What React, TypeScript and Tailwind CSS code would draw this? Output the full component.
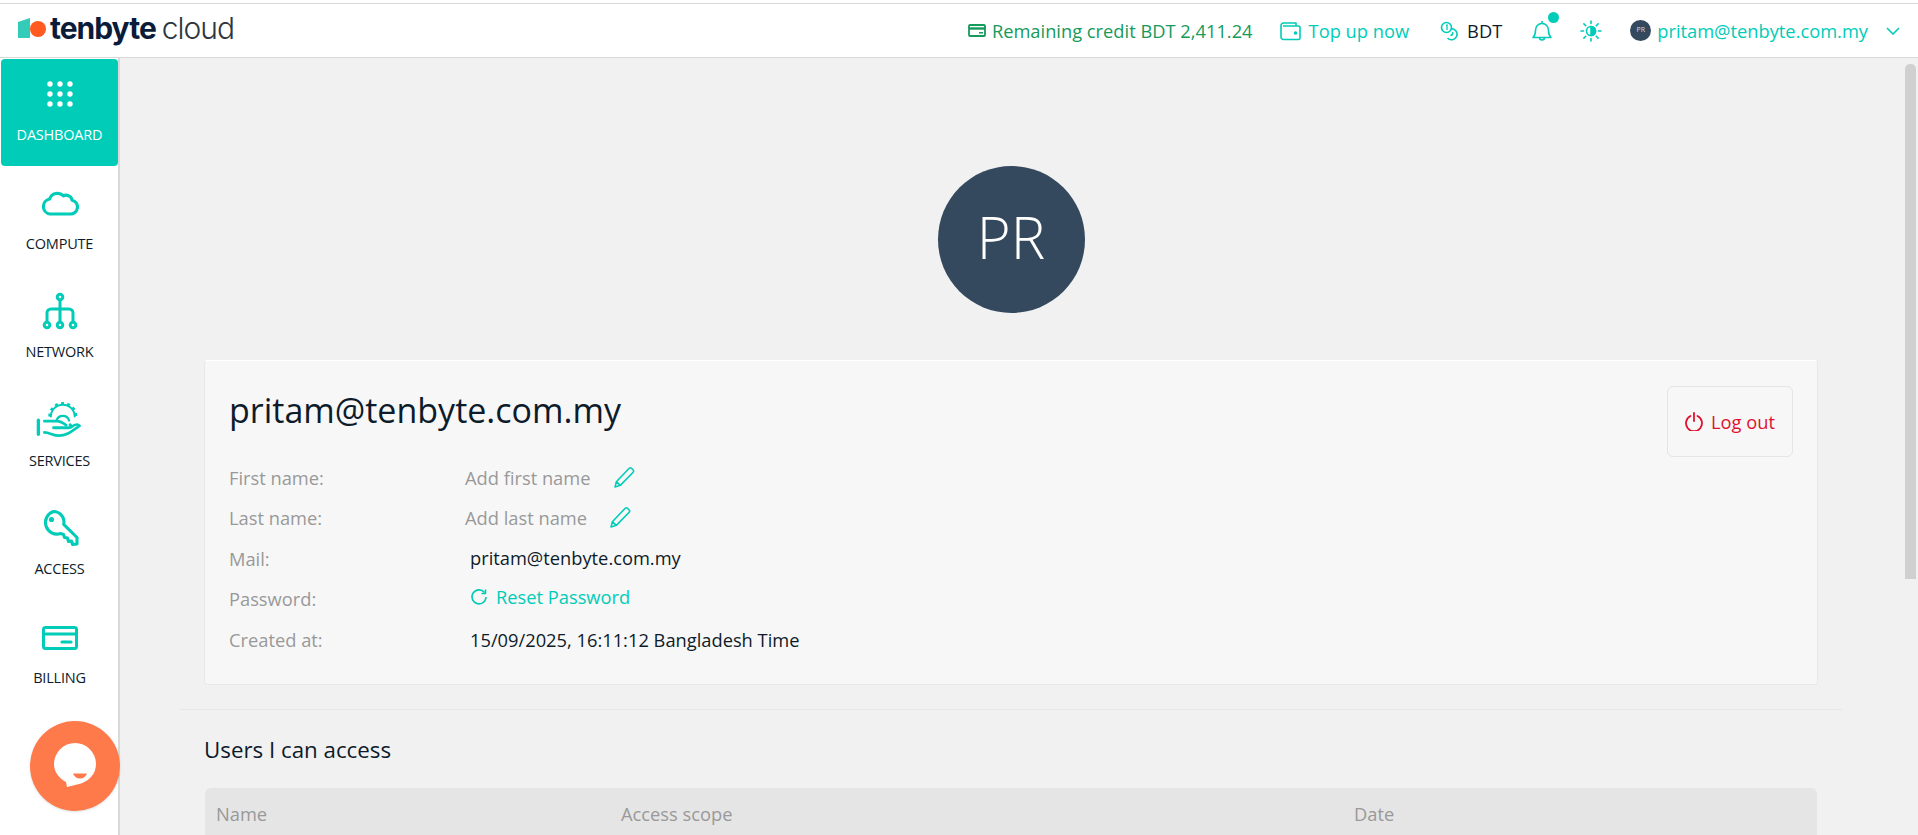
import { ReactNode } from "react";

const teal = "text-[#00ccb8]";

const GridIcon = () => (
  <svg width="26" height="26" viewBox="0 0 26 26" fill="currentColor">
    {[3, 13, 23].map((y) =>
      [3, 13, 23].map((x) => <circle key={`${x}-${y}`} cx={x} cy={y} r="2.7" />)
    )}
  </svg>
);

const CloudIcon = () => (
  <svg width="38" height="28" viewBox="0 0 38 28" fill="none" stroke="currentColor" strokeWidth="3.2" strokeLinejoin="round">
    <path d="M9 26h20.500a7 7 0 0 0 1.600-13.800 6 6 0 0 0-8.600-4.400A8.400 8.400 0 0 0 8.600 11 7.600 7.600 0 0 0 9 26Z" />
  </svg>
);

const NetworkIcon = () => (
  <svg width="36" height="38" viewBox="0 0 36 38" fill="none" stroke="currentColor" strokeWidth="3">
    <circle cx="18" cy="5" r="2.800" />
    <circle cx="5" cy="33" r="2.800" />
    <circle cx="18" cy="33" r="2.800" />
    <circle cx="31" cy="33" r="2.800" />
    <path d="M18 8v22M5 30v-9a4 4 0 0 1 4-4h18a4 4 0 0 1 4 4v9" />
  </svg>
);

const ServicesIcon = () => (
  <svg width="47" height="35" viewBox="110 68 142 106" fill="none" stroke="currentColor" strokeWidth="8" strokeLinecap="round" strokeLinejoin="round">
    <path d="M117 123v43" strokeWidth="10" />
    <path d="M135 126h38c10 0 20 6 28 12" />
    <path d="M163 146h46c6 0 8-6 4-9" strokeWidth="9" />
    <path d="M135 160c16 0 26 10 45 10 20 0 30-8 62-30-6-7-14-5-26 4" />
    <path d="M155 112a36 36 0 0 1 72 0" strokeWidth="6" />
    <path d="M151 112a40 40 0 0 1 80 0" strokeWidth="8" strokeDasharray="9 10" strokeLinecap="butt" />
    <path d="M172 124a20 20 0 0 1 38 0" strokeWidth="7" />
  </svg>
);

const KeyIcon = () => (
  <svg width="38" height="38" viewBox="0 0 38 38" fill="none" stroke="currentColor" strokeWidth="3.100" strokeLinejoin="round">
    <path d="M12.500 2.500a10.500 10.500 0 0 1 10.200 12.800L36 28.500V35l-4.500.5-1-3.500-3 .5-1-3.500-3-.5-1-3-3-1A10.500 10.500 0 1 1 12.500 2.500Z" />
    <circle cx="10.500" cy="10.500" r="2.600" fill="currentColor" stroke="none" />
  </svg>
);

const CardIcon = () => (
  <svg className="mt-[3px]" width="36" height="24" viewBox="0 0 36 24" fill="none" stroke="currentColor">
    <rect x="1.500" y="1.500" width="33" height="21" rx="2" strokeWidth="3" />
    <path d="M1.500 8h33" strokeWidth="3.200" />
    <path d="M20 16h9" strokeWidth="3.200" strokeLinecap="round" />
  </svg>
);

const NavItem = ({ icon, label, active }: { icon: ReactNode; label: string; active?: boolean }) => (
  <div
    className={`mb-[1.600px] ml-px flex h-[107px] flex-col items-center rounded-[4px] ${
      active ? "bg-[#00ccb8] text-white" : "text-[#0d1b2a]"
    }`}
  >
    <div className={`flex h-[66px] w-full items-center justify-center pt-[3px] ${active ? "text-white" : teal}`}>{icon}</div>
    <span className="text-[14.500px] leading-[20px] tracking-[-0.2px]">{label}</span>
  </div>
);

const Row = ({ label, children }: { label: string; children: ReactNode }) => (
  <div className="grid h-[40.500px] grid-cols-[236px_1fr] items-center">
    <span className="text-[#999999]">{label}</span>
    <div className="flex items-center">{children}</div>
  </div>
);

const Pencil = () => (
  <svg width="23" height="23" viewBox="0 0 22 22" fill="none" stroke="#00ccb8" strokeWidth="1.500" strokeLinejoin="round">
    <path d="M2 20l1.200-5L15.500 2.200a1.600 1.600 0 0 1 2.200 0l1.600 1.600a1.600 1.600 0 0 1 0 2.200L7 18.500 2 20ZM3.200 15 7 18.500" />
  </svg>
);

export default function App() {
  return (
    <div className="flex h-screen flex-col overflow-hidden bg-[#f1f1f1] font-['Open_Sans','Noto_Sans',sans-serif] text-[18.300px] text-[#0d1b2a]">
      <div className="h-[3px] bg-white" />
      <header className="flex h-[55px] shrink-0 items-center border-y border-[#d9d9d9] bg-white pr-[18px]">
        <div className="-mt-[5px] ml-[18px] flex items-center">
          <svg width="33" height="22" viewBox="0 0 33 22">
            <path d="M0 5 12 1v20H0Z" fill="#33ccb8" />
            <circle cx="20" cy="12" r="8" fill="#ff5a1f" />
          </svg>
          <span className="ml-[-1px] font-['Inter',sans-serif] text-[30px] leading-none font-bold tracking-[-1px] text-[#0b1b3a]">tenbyte</span>
          <span className="ml-[6px] font-['Inter',sans-serif] text-[30px] leading-none font-light tracking-[-1px] text-[#2f3640]">cloud</span>
        </div>
        <div className="ml-auto flex items-center">
          <div className="flex items-center gap-[6px] text-[#159a5b]">
            <svg width="18" height="13" viewBox="0 0 18 13" fill="none" stroke="currentColor">
              <rect x="1" y="1" width="16" height="11" rx="1" strokeWidth="1.800" />
              <path d="M1 4.500h16" strokeWidth="2.400" />
              <path d="M11 8.800h4" strokeWidth="1.500" />
            </svg>
            Remaining credit BDT 2,411.24
          </div>
          <div className={`ml-[27px] flex items-center gap-[8px] ${teal}`}>
            <svg width="21" height="20" viewBox="0 0 21 20" fill="none" stroke="currentColor" strokeWidth="1.600" strokeLinejoin="round">
              <path d="M1 4.500A2.500 2.500 0 0 1 3.500 2H16v3M1 4.500V16a2.500 2.500 0 0 0 2.500 2.500h15a1.500 1.500 0 0 0 1.500-1.500V6.500A1.500 1.500 0 0 0 18.500 5H3" />
              <circle cx="15.500" cy="12" r="1" fill="currentColor" />
            </svg>
            Top up now
          </div>
          <div className="ml-[31px] flex items-center gap-[7px]">
            <svg className={teal} width="20" height="20" viewBox="0 0 20 20" fill="none" stroke="currentColor" strokeWidth="1.600">
              <circle cx="6.500" cy="6.500" r="5" />
              <path d="M6 4.500l1-.5v5" strokeWidth="1.300" />
              <path d="M11 7.800a5.500 5.500 0 1 1-3.500 9.200M12.500 11a2.500 2.500 0 0 1-2 3.500" />
            </svg>
            BDT
          </div>
          <div className="relative ml-[30px]">
            <svg className={teal} width="20" height="22" viewBox="0 0 20 22" fill="none" stroke="currentColor" strokeWidth="1.600" strokeLinejoin="round">
              <path d="M1 17.500h18c-2-2-2.500-3.500-2.500-7 0-3.800-2.500-7-6.500-7s-6.500 3.200-6.500 7c0 3.500-.5 5-2.500 7ZM10 1v2.500M7.500 17.500a2.500 2.500 0 0 0 5 0" />
            </svg>
            <span className="absolute -top-[8px] -right-[7px] h-[11px] w-[11px] rounded-full bg-[#00ccb8]" />
          </div>
          <svg className={`ml-[28px] ${teal}`} width="22" height="22" viewBox="0 0 22 22" fill="none" stroke="currentColor" strokeWidth="1.600" strokeLinecap="round">
            <circle cx="11" cy="11" r="4.500" />
            <path d="M11 6.500a4.500 4.500 0 0 1 0 9Z" fill="currentColor" />
            <path d="M11 1v2.500M11 18.500V21M1 11h2.500M18.500 11H21M3.900 3.900l1.800 1.800M16.300 16.300l1.800 1.800M3.900 18.100l1.800-1.800M16.300 5.700l1.800-1.800" />
          </svg>
          <span className="ml-[28px] flex h-[21px] w-[21px] items-center justify-center rounded-full bg-[#34495e] text-[7px] text-[#d5dbe0]">PR</span>
          <span className={`ml-[6px] ${teal}`}>pritam@tenbyte.com.my</span>
          <svg className={`ml-[18px] ${teal}`} width="14" height="8" viewBox="0 0 14 8" fill="none" stroke="currentColor" strokeWidth="1.600">
            <path d="M1 1l6 6 6-6" />
          </svg>
        </div>
      </header>

      <div className="relative flex min-h-0 flex-1">
        <aside className="w-[120px] shrink-0 border-r-2 border-[#d9d9d9] bg-white pt-px">
          <NavItem active icon={<GridIcon />} label="DASHBOARD" />
          <NavItem icon={<CloudIcon />} label="COMPUTE" />
          <NavItem icon={<NetworkIcon />} label="NETWORK" />
          <NavItem icon={<ServicesIcon />} label="SERVICES" />
          <NavItem icon={<KeyIcon />} label="ACCESS" />
          <NavItem icon={<CardIcon />} label="BILLING" />
        </aside>

        <main className="min-w-0 flex-1 overflow-hidden pt-[108px] pr-[3px]">
          <div className="mx-auto mb-[47px] flex h-[147px] w-[147px] items-center justify-center rounded-full bg-[#34495e] pb-[6px] text-[58px] font-[350] text-white">
            PR
          </div>

          <section className="mx-[84px] h-[325px] rounded-[4px] border border-[#e8e8e8] border-t-white bg-[#f7f7f7] pt-[25px] pr-[24px] pl-[24px]">
            <div className="flex items-start justify-between">
              <h1 className="pt-[2px] text-[34px] leading-[44px]">pritam@tenbyte.com.my</h1>
              <button className="flex h-[71px] w-[126px] items-center justify-center gap-[8px] rounded-[6px] border border-[#e5e5e5] text-[#e0102f]">
                <svg width="18" height="19" viewBox="0 0 18 19" fill="none" stroke="currentColor" strokeWidth="1.800" strokeLinecap="round">
                  <path d="M5.500 4a8 8 0 1 0 7 0M9 1v8" />
                </svg>
                Log out
              </button>
            </div>
            <div>
              <Row label="First name:">
                <span className="text-[#999999]">Add first name</span>
                <span className="ml-[23px]"><Pencil /></span>
              </Row>
              <Row label="Last name:">
                <span className="text-[#999999]">Add last name</span>
                <span className="ml-[22px]"><Pencil /></span>
              </Row>
              <Row label="Mail:">
                <span className="-mt-[1px] ml-[5px]">pritam@tenbyte.com.my</span>
              </Row>
              <Row label="Password:">
                <span className={`-mt-[4px] ml-[5px] flex items-center gap-[8px] ${teal}`}>
                  <svg width="18" height="18" viewBox="0 0 18 18" fill="none" stroke="currentColor" strokeWidth="1.600">
                    <path d="M14.500 4.500A7 7 0 1 0 16 9" />
                    <path d="M15.500 1.500v4h-4" strokeLinejoin="round" />
                  </svg>
                  Reset Password
                </span>
              </Row>
              <Row label="Created at:">
                <span className="ml-[5px]">15/09/2025, 16:11:12 Bangladesh Time</span>
              </Row>
            </div>
          </section>

          <hr className="mx-[60px] mt-[24px] border-[#e6e6e6]" />

          <h2 className="mt-[25px] mr-[85px] ml-[84px] text-[22.300px] leading-[30px]">Users I can access</h2>
          <div className="mx-[85px] mt-[23px] grid h-[60px] grid-cols-[405px_733px_1fr] rounded-t-[6px] bg-[#e5e5e5] pt-[12px] pl-[11px] text-[#999999]">
            <span>Name</span>
            <span>Access scope</span>
            <span>Date</span>
          </div>
        </main>

        <div className="w-[13px] shrink-0 bg-[#f1f1f1] pt-[6px] pr-[2px]">
          <div className="h-[515px] rounded-t-[5px] bg-[#d0d0d0]" />
        </div>

        <button className="absolute top-[663px] left-[30px] flex h-[90px] w-[90px] items-center justify-center rounded-full bg-[#ff7a4a] shadow-sm">
          <svg width="44" height="48" viewBox="0 0 44 48">
            <path d="M22 1a21 21 0 0 1 21 21c0 10-7 17-15 19.500L14 45l-1-5C6 36 1 30 1 22A21 21 0 0 1 22 1Z" fill="white" />
            <path d="M20 31.500h14c-1 3-4 5-7 5s-6-2-7-5Z" fill="#ff7a4a" />
          </svg>
        </button>
      </div>
    </div>
  );
}
